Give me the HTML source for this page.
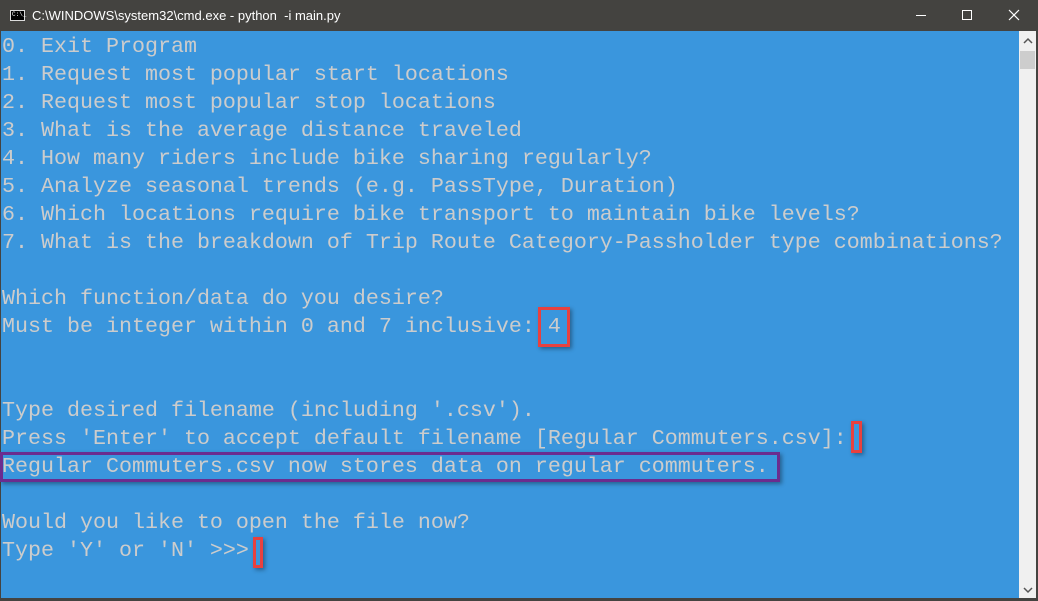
<!DOCTYPE html>
<html><head><style>
html,body{margin:0;padding:0;}
body{width:1038px;height:601px;position:relative;overflow:hidden;background:#444340;font-family:"Liberation Sans",sans-serif;}
.title{position:absolute;left:0;top:0;width:1038px;height:31px;background:#444340;color:#fff;font-size:13px;}
.title .t{position:absolute;left:32px;top:8px;}
.icon{position:absolute;left:10px;top:10px;width:15px;height:11px;background:#000;border:1px solid #ddd;box-sizing:border-box;}
.icon:after{content:"C:\\_";position:absolute;left:1px;top:0px;font-size:6px;color:#fff;font-family:"Liberation Mono",monospace;}
.ctl{position:absolute;top:6px;color:#fff;}
.con{position:absolute;left:1px;top:31px;width:1018px;height:567px;background:#3a96dd;}
.sb{position:absolute;left:1019px;top:31px;width:17px;height:567px;background:#f0f0f0;}
.thumb{position:absolute;left:1020px;top:51px;width:15px;height:18px;background:#cdcdcd;}
pre{margin:0;position:absolute;left:2px;top:33px;font-family:"Liberation Mono",monospace;font-size:21.67px;line-height:28px;color:#cccccc;}
.box{position:absolute;box-sizing:border-box;box-shadow:2px 2px 4px rgba(0,0,0,.35);}
.r{border:3px solid #e8413f;}
.p{border:3px solid #6b2c8f;}
</style></head><body>
<div class="title"><div class="icon"></div><div class="t">C:\WINDOWS\system32\cmd.exe - python &nbsp;-i main.py</div>
<svg class="ctl" style="left:916px" width="14" height="20"><line x1="0" y1="9.5" x2="10" y2="9.5" stroke="#fff"/></svg>
<svg class="ctl" style="left:961px" width="14" height="20"><rect x="1.5" y="4.5" width="9" height="9" fill="none" stroke="#fff"/></svg>
<svg class="ctl" style="left:1008px" width="14" height="20"><path d="M1 4L11 14M11 4L1 14" stroke="#fff" stroke-width="1.2"/></svg>
</div>
<div class="con"></div>
<div class="sb"></div><div class="thumb"></div>
<svg style="position:absolute;left:1022px;top:36px" width="12" height="10"><path d="M2 7L6 3L10 7" fill="none" stroke="#555" stroke-width="1.5"/></svg>
<svg style="position:absolute;left:1022px;top:585px" width="12" height="10"><path d="M2 3L6 7L10 3" fill="none" stroke="#555" stroke-width="1.5"/></svg>
<pre>0. Exit Program
1. Request most popular start locations
2. Request most popular stop locations
3. What is the average distance traveled
4. How many riders include bike sharing regularly?
5. Analyze seasonal trends (e.g. PassType, Duration)
6. Which locations require bike transport to maintain bike levels?
7. What is the breakdown of Trip Route Category-Passholder type combinations?

Which function/data do you desire?
Must be integer within 0 and 7 inclusive: 4


Type desired filename (including '.csv').
Press 'Enter' to accept default filename [Regular Commuters.csv]: 
Regular Commuters.csv now stores data on regular commuters.

Would you like to open the file now?
Type 'Y' or 'N' >>> </pre>
<div class="box r" style="left:538px;top:307px;width:32px;height:40px"></div>
<div class="box r" style="left:851px;top:421px;width:11px;height:32px"></div>
<div class="box p" style="left:0px;top:452px;width:780px;height:30px"></div>
<div class="box r" style="left:253px;top:537px;width:10px;height:31px"></div>
</body></html>
